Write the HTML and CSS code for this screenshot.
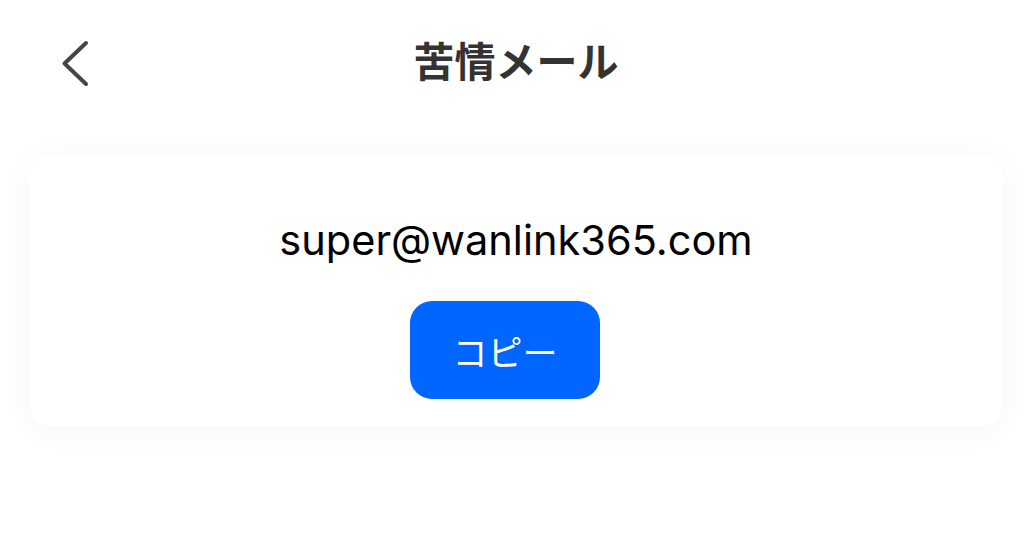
FILE: index.html
```html
<!DOCTYPE html>
<html lang="ja">
<head>
<meta charset="utf-8">
<title>苦情メール</title>
<link rel="stylesheet" href="styles.css">
</head>
<body>
<header class="nav">
  <button class="back" aria-label="戻る">
    <svg width="30" height="48" viewBox="0 0 30 48"><polyline points="25,3 3.5,23.5 25,44" fill="none" stroke="#454545" stroke-width="4" stroke-linecap="round" stroke-linejoin="round"/></svg>
  </button>
  <h1 class="title">苦情メール</h1>
</header>
<main class="card">
  <p class="email">super@wanlink365.com</p>
  <button class="copy">コピー</button>
</main>
</body>
</html>
```

FILE: styles.css
```css
html, body {
  margin: 0;
  padding: 0;
  background: #ffffff;
}
body {
  width: 1024px;
  height: 534px;
  overflow: hidden;
  font-family: "Inter", "Noto Sans CJK JP", sans-serif;
}
.nav {
  position: relative;
  height: 122px;
  display: flex;
  align-items: center;
  justify-content: center;
}
.back {
  position: absolute;
  left: 61px;
  top: 40px;
  padding: 0;
  margin: 0;
  border: none;
  background: none;
  width: 30px;
  height: 48px;
  display: block;
}
.back svg { display: block; }
.title {
  margin: -4px 0 0 8px;
  font-family: "Noto Sans CJK JP", sans-serif;
  font-weight: 700;
  font-size: 41px;
  line-height: 48px;
  color: #333333;
}
.card {
  margin: 32px 21px 0 29px;
  height: 273px;
  box-sizing: border-box;
  padding-top: 62px;
  background: #ffffff;
  border-radius: 24px;
  box-shadow: 0 4px 30px rgba(0, 0, 0, 0.045);
  display: flex;
  flex-direction: column;
  align-items: center;
}
.email {
  margin: 0;
  font-family: "Inter", sans-serif;
  font-size: 41.5px;
  line-height: 48px;
  color: #000000;
}
.copy {
  margin: 37px 22px 0 0;
  width: 190px;
  height: 98px;
  border: none;
  border-radius: 22px;
  background: #0066ff;
  color: #ffffff;
  font-family: "Noto Sans CJK JP", sans-serif;
  font-size: 35px;
  padding: 0;
  display: flex;
  align-items: center;
  justify-content: center;
}
```
